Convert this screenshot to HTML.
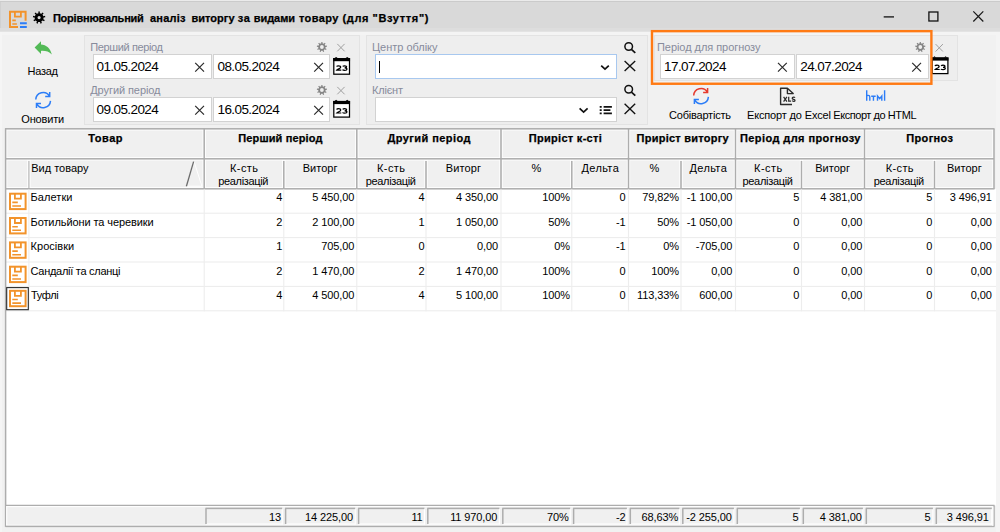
<!DOCTYPE html>
<html><head><meta charset="utf-8"><title>UI</title>
<style>
html,body{margin:0;padding:0}
body{width:1000px;height:532px;overflow:hidden;position:relative;background:#f1f1f1;font-family:"Liberation Sans",sans-serif;font-size:11px;color:#000}
.a{position:absolute}
.t{position:absolute;white-space:pre;font-family:"Liberation Sans",sans-serif}
.n{font-size:11px;line-height:13px;letter-spacing:-0.1px}
.tb{left:0;top:0;width:1000px;height:31px;background:#d9d9d9}
.pn{border:1px solid #e3e3e3;background:#eeeeee;box-sizing:border-box}
.in{background:#fff;border:1px solid #d2d2d2;box-sizing:border-box}
.inf{background:#fff;border:1px solid #a8c8ef;box-sizing:border-box}
.hc{background:#f0f0f0;box-sizing:border-box;border-left:1px solid #fff;border-top:1px solid #fff;border-right:1px solid #a6a6a6;border-bottom:1px solid #a6a6a6}
.fc{background:#f0f0f0;box-sizing:border-box;border-left:1px solid #a6a6a6;border-top:1px solid #a6a6a6;border-right:1px solid #fff;border-bottom:1px solid #fff}
.vl{width:1px;background:#efefef}
.hl{height:1px;background:#efefef}
svg{position:absolute;overflow:visible}

</style></head>
<body>
<div class="a tb" style="left:0px;top:0px;width:1000px;height:31px;"></div>
<div class="a " style="left:0px;top:0px;width:1000px;height:1px;background:#ebebeb"></div>
<div class="a " style="left:0px;top:1px;width:1000px;height:1px;background:#cbcbcb"></div>
<div class="a " style="left:0px;top:2px;width:1px;height:29px;background:#d0d0d0"></div>
<div class="a " style="left:0px;top:28px;width:1000px;height:3px;background:#dddddd"></div>
<div class="a " style="left:0px;top:31px;width:1000px;height:1px;background:#e3e3e3"></div>
<div class="a " style="left:0px;top:32px;width:1000px;height:3px;background:#f4f4f4"></div>
<div class="a " style="left:996px;top:32px;width:4px;height:500px;background:#f4f4f4"></div>
<div class="a " style="left:0px;top:32px;width:2px;height:500px;background:#f5f5f5"></div>
<div class="a pn" style="left:84px;top:35px;width:276px;height:90px;"></div>
<div class="a pn" style="left:366px;top:35px;width:282px;height:90px;"></div>
<div class="a pn" style="left:654px;top:35px;width:304px;height:46px;"></div>
<div class="a in" style="left:93px;top:54px;width:119px;height:25px;"></div>
<div class="a in" style="left:93px;top:97px;width:119px;height:25px;"></div>
<div class="a in" style="left:213px;top:54px;width:117px;height:25px;"></div>
<div class="a in" style="left:213px;top:97px;width:117px;height:25px;"></div>
<div class="a inf" style="left:375px;top:54px;width:242px;height:25px;"></div>
<div class="a in" style="left:375px;top:97px;width:242px;height:25px;"></div>
<div class="a in" style="left:660px;top:54px;width:135px;height:25px;"></div>
<div class="a in" style="left:796px;top:54px;width:133px;height:25px;"></div>
<div class="a " style="left:379px;top:61px;width:1px;height:12px;background:#000"></div>
<svg class="a" style="left:0;top:0" width="1000" height="532" viewBox="0 0 1000 532">
<rect x="5.6" y="188.8" width="990.4" height="316.7" fill="#fff"/>
<rect x="5.6" y="128.8" width="988.4" height="60" fill="#f0f0f0"/>
<rect x="5.6" y="505.5" width="988.4" height="20.9" fill="#f0f0f0"/>
<rect x="5.6" y="129.35" width="988.4" height="1.1" fill="#ffffff"/>
<rect x="5.6" y="159.35" width="988.4" height="1.1" fill="#ffffff"/>
<rect x="5.6" y="157.15" width="988.4" height="1.1" fill="#ffffff"/>
<rect x="5.6" y="187.15" width="988.4" height="1.1" fill="#ffffff"/>
<rect x="6.15" y="128.8" width="1.1" height="60" fill="#ffffff"/>
<rect x="29.45" y="159.3" width="1.1" height="29" fill="#ffffff"/>
<rect x="27.25" y="159.3" width="1.1" height="29" fill="#ffffff"/>
<rect x="204.75" y="129.3" width="1.1" height="59" fill="#ffffff"/>
<rect x="202.55" y="129.3" width="1.1" height="59" fill="#ffffff"/>
<rect x="284.35" y="159.3" width="1.1" height="29" fill="#ffffff"/>
<rect x="282.15" y="159.3" width="1.1" height="29" fill="#ffffff"/>
<rect x="357.35" y="129.3" width="1.1" height="59" fill="#ffffff"/>
<rect x="355.15" y="129.3" width="1.1" height="59" fill="#ffffff"/>
<rect x="426.55" y="159.3" width="1.1" height="29" fill="#ffffff"/>
<rect x="424.35" y="159.3" width="1.1" height="29" fill="#ffffff"/>
<rect x="501.55" y="129.3" width="1.1" height="59" fill="#ffffff"/>
<rect x="499.35" y="129.3" width="1.1" height="59" fill="#ffffff"/>
<rect x="572.35" y="159.3" width="1.1" height="29" fill="#ffffff"/>
<rect x="570.15" y="159.3" width="1.1" height="29" fill="#ffffff"/>
<rect x="629.05" y="129.3" width="1.1" height="59" fill="#ffffff"/>
<rect x="626.85" y="129.3" width="1.1" height="59" fill="#ffffff"/>
<rect x="681.55" y="159.3" width="1.1" height="29" fill="#ffffff"/>
<rect x="679.35" y="159.3" width="1.1" height="29" fill="#ffffff"/>
<rect x="736.05" y="129.3" width="1.1" height="59" fill="#ffffff"/>
<rect x="733.85" y="129.3" width="1.1" height="59" fill="#ffffff"/>
<rect x="802.05" y="159.3" width="1.1" height="29" fill="#ffffff"/>
<rect x="799.85" y="159.3" width="1.1" height="29" fill="#ffffff"/>
<rect x="865.05" y="129.3" width="1.1" height="59" fill="#ffffff"/>
<rect x="862.85" y="129.3" width="1.1" height="59" fill="#ffffff"/>
<rect x="935.05" y="159.3" width="1.1" height="29" fill="#ffffff"/>
<rect x="932.85" y="159.3" width="1.1" height="29" fill="#ffffff"/>
<rect x="992.35" y="129.3" width="1.1" height="59" fill="#ffffff"/>
<rect x="28.35" y="161" width="1.1" height="27.8" fill="#b4b4b4"/>
<rect x="203.45" y="128.8" width="1.5" height="60" fill="#adadad"/>
<rect x="283.05" y="161" width="1.5" height="27.8" fill="#adadad"/>
<rect x="356.05" y="128.8" width="1.5" height="60" fill="#adadad"/>
<rect x="425.25" y="161" width="1.5" height="27.8" fill="#adadad"/>
<rect x="500.25" y="128.8" width="1.5" height="60" fill="#adadad"/>
<rect x="571.05" y="161" width="1.5" height="27.8" fill="#adadad"/>
<rect x="627.75" y="128.8" width="1.5" height="60" fill="#adadad"/>
<rect x="680.25" y="161" width="1.5" height="27.8" fill="#adadad"/>
<rect x="734.75" y="128.8" width="1.5" height="60" fill="#adadad"/>
<rect x="800.75" y="161" width="1.5" height="27.8" fill="#adadad"/>
<rect x="863.75" y="128.8" width="1.5" height="60" fill="#adadad"/>
<rect x="933.75" y="161" width="1.5" height="27.8" fill="#adadad"/>
<rect x="993.25" y="128.8" width="1.5" height="60" fill="#adadad"/>
<rect x="5.1" y="128.05" width="989.4" height="1.5" fill="#adadad"/>
<rect x="5.6" y="158.05" width="988.4" height="1.5" fill="#adadad"/>
<rect x="5.6" y="188.05" width="988.9" height="1.5" fill="#adadad"/>
<rect x="28.35" y="189.4" width="1.1" height="121.9" fill="#ededed"/>
<rect x="203.65" y="189.4" width="1.1" height="121.9" fill="#ededed"/>
<rect x="283.25" y="189.4" width="1.1" height="121.9" fill="#ededed"/>
<rect x="356.25" y="189.4" width="1.1" height="121.9" fill="#ededed"/>
<rect x="425.45" y="189.4" width="1.1" height="121.9" fill="#ededed"/>
<rect x="500.45" y="189.4" width="1.1" height="121.9" fill="#ededed"/>
<rect x="571.25" y="189.4" width="1.1" height="121.9" fill="#ededed"/>
<rect x="627.95" y="189.4" width="1.1" height="121.9" fill="#ededed"/>
<rect x="680.45" y="189.4" width="1.1" height="121.9" fill="#ededed"/>
<rect x="734.95" y="189.4" width="1.1" height="121.9" fill="#ededed"/>
<rect x="800.95" y="189.4" width="1.1" height="121.9" fill="#ededed"/>
<rect x="863.95" y="189.4" width="1.1" height="121.9" fill="#ededed"/>
<rect x="933.95" y="189.4" width="1.1" height="121.9" fill="#ededed"/>
<rect x="6.1" y="212.65" width="989.9" height="1.1" fill="#ededed"/>
<rect x="6.1" y="237.05" width="989.9" height="1.1" fill="#ededed"/>
<rect x="6.1" y="261.45" width="989.9" height="1.1" fill="#ededed"/>
<rect x="6.1" y="285.85" width="989.9" height="1.1" fill="#ededed"/>
<rect x="6.1" y="310.25" width="989.9" height="1.1" fill="#ededed"/>
<rect x="4.85" y="128.3" width="1.5" height="398.6" fill="#adadad"/>
<rect x="5.6" y="504.75" width="988.9" height="1.5" fill="#adadad"/>
<rect x="6.1" y="506.05" width="987.9" height="1.1" fill="#ffffff"/>
<rect x="6.1" y="524.75" width="987.4" height="1.1" fill="#ffffff"/>
<rect x="6.15" y="506.5" width="1.1" height="19.4" fill="#ffffff"/>
<rect x="5.6" y="525.65" width="988.9" height="1.5" fill="#adadad"/>
<rect x="993.25" y="505.5" width="1.5" height="20.9" fill="#adadad"/>
<rect x="992.35" y="506.5" width="1.1" height="19.4" fill="#ffffff"/>
<rect x="206" y="523.45" width="76.7" height="1.1" fill="#ffffff"/>
<rect x="281.65" y="508.4" width="1.1" height="16.1" fill="#ffffff"/>
<rect x="205.5" y="507.65" width="76.7" height="1.5" fill="#adadad"/>
<rect x="205.25" y="508.4" width="1.5" height="15.6" fill="#adadad"/>
<rect x="285.6" y="523.45" width="70.1" height="1.1" fill="#ffffff"/>
<rect x="354.65" y="508.4" width="1.1" height="16.1" fill="#ffffff"/>
<rect x="285.1" y="507.65" width="70.1" height="1.5" fill="#adadad"/>
<rect x="284.85" y="508.4" width="1.5" height="15.6" fill="#adadad"/>
<rect x="358.6" y="523.45" width="66.3" height="1.1" fill="#ffffff"/>
<rect x="423.85" y="508.4" width="1.1" height="16.1" fill="#ffffff"/>
<rect x="358.1" y="507.65" width="66.3" height="1.5" fill="#adadad"/>
<rect x="357.85" y="508.4" width="1.5" height="15.6" fill="#adadad"/>
<rect x="427.8" y="523.45" width="72.1" height="1.1" fill="#ffffff"/>
<rect x="498.85" y="508.4" width="1.1" height="16.1" fill="#ffffff"/>
<rect x="427.3" y="507.65" width="72.1" height="1.5" fill="#adadad"/>
<rect x="427.05" y="508.4" width="1.5" height="15.6" fill="#adadad"/>
<rect x="502.8" y="523.45" width="67.9" height="1.1" fill="#ffffff"/>
<rect x="569.65" y="508.4" width="1.1" height="16.1" fill="#ffffff"/>
<rect x="502.3" y="507.65" width="67.9" height="1.5" fill="#adadad"/>
<rect x="502.05" y="508.4" width="1.5" height="15.6" fill="#adadad"/>
<rect x="573.6" y="523.45" width="53.8" height="1.1" fill="#ffffff"/>
<rect x="626.35" y="508.4" width="1.1" height="16.1" fill="#ffffff"/>
<rect x="573.1" y="507.65" width="53.8" height="1.5" fill="#adadad"/>
<rect x="572.85" y="508.4" width="1.5" height="15.6" fill="#adadad"/>
<rect x="630.3" y="523.45" width="49.6" height="1.1" fill="#ffffff"/>
<rect x="678.85" y="508.4" width="1.1" height="16.1" fill="#ffffff"/>
<rect x="629.8" y="507.65" width="49.6" height="1.5" fill="#adadad"/>
<rect x="629.55" y="508.4" width="1.5" height="15.6" fill="#adadad"/>
<rect x="682.8" y="523.45" width="51.6" height="1.1" fill="#ffffff"/>
<rect x="733.35" y="508.4" width="1.1" height="16.1" fill="#ffffff"/>
<rect x="682.3" y="507.65" width="51.6" height="1.5" fill="#adadad"/>
<rect x="682.05" y="508.4" width="1.5" height="15.6" fill="#adadad"/>
<rect x="737.3" y="523.45" width="63.1" height="1.1" fill="#ffffff"/>
<rect x="799.35" y="508.4" width="1.1" height="16.1" fill="#ffffff"/>
<rect x="736.8" y="507.65" width="63.1" height="1.5" fill="#adadad"/>
<rect x="736.55" y="508.4" width="1.5" height="15.6" fill="#adadad"/>
<rect x="803.3" y="523.45" width="60.1" height="1.1" fill="#ffffff"/>
<rect x="862.35" y="508.4" width="1.1" height="16.1" fill="#ffffff"/>
<rect x="802.8" y="507.65" width="60.1" height="1.5" fill="#adadad"/>
<rect x="802.55" y="508.4" width="1.5" height="15.6" fill="#adadad"/>
<rect x="866.3" y="523.45" width="67.1" height="1.1" fill="#ffffff"/>
<rect x="932.35" y="508.4" width="1.1" height="16.1" fill="#ffffff"/>
<rect x="865.8" y="507.65" width="67.1" height="1.5" fill="#adadad"/>
<rect x="865.55" y="508.4" width="1.5" height="15.6" fill="#adadad"/>
<rect x="936.3" y="523.45" width="56" height="1.1" fill="#ffffff"/>
<rect x="991.25" y="508.4" width="1.1" height="16.1" fill="#ffffff"/>
<rect x="935.8" y="507.65" width="56" height="1.5" fill="#adadad"/>
<rect x="935.55" y="508.4" width="1.5" height="15.6" fill="#adadad"/>
<rect x="6.7" y="287.6" width="21.6" height="22.1" fill="none" stroke="#2a2a2a" stroke-width="1.1"/>
</svg><svg class="a" style="left:0;top:0" width="1000" height="532" viewBox="0 0 1000 532" font-family="Liberation Sans, sans-serif">
<path d="M25.6 20.7 V11.7 H10 V27.1 H18" fill="none" stroke="#f2932b" stroke-width="2"/><path d="M14.9 11.7 V16.7 H20.9 V11.7" fill="none" stroke="#f2932b" stroke-width="1.8"/><path d="M12.3 20.4 H15.8 M12.3 24 H16.9" fill="none" stroke="#f2932b" stroke-width="1.6"/><path d="M20 23.2 H26.8 M20 27.1 H26.8" fill="none" stroke="#2c7df7" stroke-width="2"/>
<rect x="10" y="193.7" width="15.6" height="15.4" fill="none" stroke="#f2932b" stroke-width="2"/><path d="M14.9 193.7 V198.7 H20.9 V193.7" fill="none" stroke="#f2932b" stroke-width="1.8"/><path d="M12.3 202.4 H17.8 M12.3 206 H21" fill="none" stroke="#f2932b" stroke-width="1.6"/>
<rect x="10" y="218" width="15.6" height="15.4" fill="none" stroke="#f2932b" stroke-width="2"/><path d="M14.9 218 V223 H20.9 V218" fill="none" stroke="#f2932b" stroke-width="1.8"/><path d="M12.3 226.7 H17.8 M12.3 230.3 H21" fill="none" stroke="#f2932b" stroke-width="1.6"/>
<rect x="10" y="242.4" width="15.6" height="15.4" fill="none" stroke="#f2932b" stroke-width="2"/><path d="M14.9 242.4 V247.4 H20.9 V242.4" fill="none" stroke="#f2932b" stroke-width="1.8"/><path d="M12.3 251.1 H17.8 M12.3 254.7 H21" fill="none" stroke="#f2932b" stroke-width="1.6"/>
<rect x="10" y="266.7" width="15.6" height="15.4" fill="none" stroke="#f2932b" stroke-width="2"/><path d="M14.9 266.7 V271.7 H20.9 V266.7" fill="none" stroke="#f2932b" stroke-width="1.8"/><path d="M12.3 275.4 H17.8 M12.3 279 H21" fill="none" stroke="#f2932b" stroke-width="1.6"/>
<rect x="10" y="290.8" width="15.6" height="15.4" fill="none" stroke="#f2932b" stroke-width="2"/><path d="M14.9 290.8 V295.8 H20.9 V290.8" fill="none" stroke="#f2932b" stroke-width="1.8"/><path d="M12.3 299.5 H17.8 M12.3 303.1 H21" fill="none" stroke="#f2932b" stroke-width="1.6"/>
<path d="M38.32 11.45 L39.88 11.45 L39.76 13.15 L41.45 13.76 L42.46 12.39 L43.65 13.39 L42.47 14.62 L43.37 16.17 L45.02 15.77 L45.29 17.30 L43.60 17.48 L43.29 19.25 L44.82 20.00 L44.04 21.35 L42.62 20.40 L41.25 21.56 L41.93 23.11 L40.47 23.65 L40.00 22.01 L38.20 22.01 L37.73 23.65 L36.27 23.11 L36.95 21.56 L35.58 20.40 L34.16 21.35 L33.38 20.00 L34.91 19.25 L34.60 17.48 L32.91 17.30 L33.18 15.77 L34.83 16.17 L35.73 14.62 L34.55 13.39 L35.74 12.39 L36.75 13.76 L38.44 13.15Z M37.50 17.60 a1.60 1.60 0 1 0 3.20 0 a1.60 1.60 0 1 0 -3.20 0Z" fill="#000" fill-rule="evenodd"/>
<path d="M321.26 41.94 L322.54 41.94 L322.45 43.34 L323.83 43.85 L324.66 42.71 L325.64 43.53 L324.67 44.55 L325.41 45.83 L326.77 45.49 L326.99 46.75 L325.60 46.90 L325.34 48.36 L326.60 48.98 L325.96 50.08 L324.80 49.30 L323.66 50.25 L324.23 51.54 L323.03 51.97 L322.64 50.63 L321.16 50.63 L320.77 51.97 L319.57 51.54 L320.14 50.25 L319.00 49.30 L317.84 50.08 L317.20 48.98 L318.46 48.36 L318.20 46.90 L316.81 46.75 L317.03 45.49 L318.39 45.83 L319.13 44.55 L318.16 43.53 L319.14 42.71 L319.97 43.85 L321.35 43.34Z M320.00 47.00 a1.90 1.90 0 1 0 3.80 0 a1.90 1.90 0 1 0 -3.80 0Z" fill="#858585" fill-rule="evenodd"/>
<path d="M321.26 84.94 L322.54 84.94 L322.45 86.34 L323.83 86.85 L324.66 85.71 L325.64 86.53 L324.67 87.55 L325.41 88.83 L326.77 88.49 L326.99 89.75 L325.60 89.90 L325.34 91.36 L326.60 91.98 L325.96 93.08 L324.80 92.30 L323.66 93.25 L324.23 94.54 L323.03 94.97 L322.64 93.63 L321.16 93.63 L320.77 94.97 L319.57 94.54 L320.14 93.25 L319.00 92.30 L317.84 93.08 L317.20 91.98 L318.46 91.36 L318.20 89.90 L316.81 89.75 L317.03 88.49 L318.39 88.83 L319.13 87.55 L318.16 86.53 L319.14 85.71 L319.97 86.85 L321.35 86.34Z M320.00 90.00 a1.90 1.90 0 1 0 3.80 0 a1.90 1.90 0 1 0 -3.80 0Z" fill="#858585" fill-rule="evenodd"/>
<path d="M919.66 41.94 L920.94 41.94 L920.85 43.34 L922.23 43.85 L923.06 42.71 L924.04 43.53 L923.07 44.55 L923.81 45.83 L925.17 45.49 L925.39 46.75 L924.00 46.90 L923.74 48.36 L925.00 48.98 L924.36 50.08 L923.20 49.30 L922.06 50.25 L922.63 51.54 L921.43 51.97 L921.04 50.63 L919.56 50.63 L919.17 51.97 L917.97 51.54 L918.54 50.25 L917.40 49.30 L916.24 50.08 L915.60 48.98 L916.86 48.36 L916.60 46.90 L915.21 46.75 L915.43 45.49 L916.79 45.83 L917.53 44.55 L916.56 43.53 L917.54 42.71 L918.37 43.85 L919.75 43.34Z M918.40 47.00 a1.90 1.90 0 1 0 3.80 0 a1.90 1.90 0 1 0 -3.80 0Z" fill="#858585" fill-rule="evenodd"/>
<path d="M34.6 47.6 L41 41.2 L41 44.4 C46.2 44.8 50.6 48 51.8 54.6 C49 51.6 45.6 50.7 41 50.9 L41 54 Z" fill="#53ba57"/>
<g transform="translate(0 0)" fill="none" stroke-width="1.5"><path d="M35.8 99.6 A7.3 7.3 0 0 1 49.4 96.1 M49.7 92 V96.5 H45.2" stroke="#2c7df7"/><path d="M50.5 100.9 A7.3 7.3 0 0 1 36.8 103.8 M36.5 107.9 V103.4 H41" stroke="#2c7df7"/></g>
<g transform="translate(657.9 -4)" fill="none" stroke-width="1.5"><path d="M35.8 99.6 A7.3 7.3 0 0 1 49.4 96.1 M49.7 92 V96.5 H45.2" stroke="#e63b2e"/><path d="M50.5 100.9 A7.3 7.3 0 0 1 36.8 103.8 M36.5 107.9 V103.4 H41" stroke="#2c7df7"/></g>
<path d="M792 104.5 H780.6 V88.2 H787.4 L793.2 93.6 H787.4 V88.2" fill="none" stroke="#2b2b2b" stroke-width="1.4" stroke-linejoin="round"/>
<path d="M783.6 96.9 L786.9 101.6 M786.9 96.9 L783.6 101.6 M788.7 96.7 V101 H791 M795 97.6 Q794.6 97.1 793.6 97.1 Q792.2 97.1 792.2 98.2 Q792.2 99.1 793.6 99.3 Q795 99.5 795 100.4 Q795 101.3 793.6 101.3 Q792.5 101.3 792 100.7" fill="none" stroke="#2b2b2b" stroke-width="1.25"/>
<path d="M866.7 90.3 V100.8 M866.7 96 Q866.9 95.4 868.2 95.4 Q869.8 95.4 869.8 97 V100.8 M871.2 96.3 H875.7 M873.45 96.3 V100.8 M877.5 100.8 V96 L879.7 98.6 L881.8 96 V100.8 M884.6 90.3 V100.8" fill="none" stroke="#2c7df7" stroke-width="1.4"/>
<g><rect x="333.8" y="58.7" width="15.7" height="15.5" fill="#fff" stroke="#000" stroke-width="1.25"/><rect x="333.15" y="58" width="16.9" height="3.2" fill="#000"/><path d="M334.6 58.1 l1.5 -1.2 l1.5 1.2z M345.7 58.1 l1.5 -1.2 l1.5 1.2z" fill="#000"/><g transform="translate(336.4 65.2) scale(1 0.88)" fill="none" stroke="#000" stroke-width="1.35"><path d="M0.2 1.6 Q0.6 0.7 2.3 0.7 Q4.3 0.7 4.3 2.1 Q4.3 3.2 2.4 4.2 Q0.8 5 0.4 5.6 H4.9"/><path d="M6.3 1.4 Q6.9 0.7 8.3 0.7 Q10.2 0.7 10.2 1.9 Q10.2 3.1 8.2 3.1 Q10.5 3.1 10.5 4.5 Q10.5 5.8 8.4 5.8 Q6.7 5.8 6.1 5"/></g></g>
<g><rect x="333.8" y="101.6" width="15.7" height="15.5" fill="#fff" stroke="#000" stroke-width="1.25"/><rect x="333.15" y="100.9" width="16.9" height="3.2" fill="#000"/><path d="M334.6 101 l1.5 -1.2 l1.5 1.2z M345.7 101 l1.5 -1.2 l1.5 1.2z" fill="#000"/><g transform="translate(336.4 108.1) scale(1 0.88)" fill="none" stroke="#000" stroke-width="1.35"><path d="M0.2 1.6 Q0.6 0.7 2.3 0.7 Q4.3 0.7 4.3 2.1 Q4.3 3.2 2.4 4.2 Q0.8 5 0.4 5.6 H4.9"/><path d="M6.3 1.4 Q6.9 0.7 8.3 0.7 Q10.2 0.7 10.2 1.9 Q10.2 3.1 8.2 3.1 Q10.5 3.1 10.5 4.5 Q10.5 5.8 8.4 5.8 Q6.7 5.8 6.1 5"/></g></g>
<g><rect x="932.2" y="58.1" width="15.7" height="15.5" fill="#fff" stroke="#000" stroke-width="1.25"/><rect x="931.55" y="57.4" width="16.9" height="3.2" fill="#000"/><path d="M933 57.5 l1.5 -1.2 l1.5 1.2z M944.1 57.5 l1.5 -1.2 l1.5 1.2z" fill="#000"/><g transform="translate(934.8 64.6) scale(1 0.88)" fill="none" stroke="#000" stroke-width="1.35"><path d="M0.2 1.6 Q0.6 0.7 2.3 0.7 Q4.3 0.7 4.3 2.1 Q4.3 3.2 2.4 4.2 Q0.8 5 0.4 5.6 H4.9"/><path d="M6.3 1.4 Q6.9 0.7 8.3 0.7 Q10.2 0.7 10.2 1.9 Q10.2 3.1 8.2 3.1 Q10.5 3.1 10.5 4.5 Q10.5 5.8 8.4 5.8 Q6.7 5.8 6.1 5"/></g></g>
<path d="M195.2 62.9 L204 71.6 M195.2 71.6 L204 62.9" stroke="#2a2a2a" stroke-width="1.2" fill="none"/>
<path d="M314.2 62.9 L323 71.6 M314.2 71.6 L323 62.9" stroke="#2a2a2a" stroke-width="1.2" fill="none"/>
<path d="M778 62.9 L786.8 71.6 M778 71.6 L786.8 62.9" stroke="#2a2a2a" stroke-width="1.2" fill="none"/>
<path d="M912.2 62.9 L921 71.6 M912.2 71.6 L921 62.9" stroke="#2a2a2a" stroke-width="1.2" fill="none"/>
<path d="M195.2 105.9 L204 114.6 M195.2 114.6 L204 105.9" stroke="#2a2a2a" stroke-width="1.2" fill="none"/>
<path d="M314.2 105.9 L323 114.6 M314.2 114.6 L323 105.9" stroke="#2a2a2a" stroke-width="1.2" fill="none"/>
<path d="M337.3 43.9 L344.6 51.3 M337.3 51.3 L344.6 43.9" stroke="#a0a0a0" stroke-width="1" fill="none"/>
<path d="M337.3 86.9 L344.6 94.3 M337.3 94.3 L344.6 86.9" stroke="#a0a0a0" stroke-width="1" fill="none"/>
<path d="M935.6 44.1 L942.9 51.5 M935.6 51.5 L942.9 44.1" stroke="#a0a0a0" stroke-width="1" fill="none"/>
<path d="M624.6 61 L635.2 71.1 M624.6 71.1 L635.2 61" stroke="#111" stroke-width="1.35" fill="none"/>
<path d="M624.6 103.8 L635.2 114 M624.6 114 L635.2 103.8" stroke="#111" stroke-width="1.35" fill="none"/>
<circle cx="628.7" cy="46.5" r="3.8" fill="none" stroke="#111" stroke-width="1.5"/><path d="M631.4 49.4 L635.3 52.8" stroke="#111" stroke-width="1.7"/>
<circle cx="628.7" cy="89.3" r="3.8" fill="none" stroke="#111" stroke-width="1.5"/><path d="M631.4 92.2 L635.3 95.6" stroke="#111" stroke-width="1.7"/>
<path d="M601.2 65.6 L605 69.2 L608.8 65.6" fill="none" stroke="#111" stroke-width="1.7"/>
<path d="M579.6 108.3 L583.6 112 L587.6 108.3" fill="none" stroke="#111" stroke-width="1.7"/>
<path d="M599.7 106.9 H601.7 M603.6 106.9 H611.9" stroke="#111" stroke-width="1.7"/>
<path d="M599.7 110.1 H601.7 M603.6 110.1 H610.4" stroke="#111" stroke-width="1.7"/>
<path d="M599.7 113.3 H601.7 M603.6 113.3 H611.9" stroke="#111" stroke-width="1.7"/>
<path d="M883.7 16.9 H894" stroke="#111" stroke-width="1.3"/>
<rect x="928.9" y="12" width="9" height="9" fill="none" stroke="#111" stroke-width="1.3"/>
<path d="M973.3 11.4 L983.3 21.5 M973.3 21.5 L983.3 11.4" stroke="#1a1a1a" stroke-width="1.25" fill="none"/>
<path d="M194.3 162.3 L201.9 186.2 L186.8 186.2" stroke="#fff" stroke-width="1" fill="none"/><path d="M186.4 186.3 L193.6 161.6" stroke="#6c6c6c" stroke-width="1.3"/>
<rect x="652" y="31.15" width="279.4" height="52.6" fill="none" stroke="#ff7a14" stroke-width="2.4"/>
</svg>
<!-- text -->
<span class="t" style="left:52.90px;top:12.39px;font-size:11px;line-height:13px;letter-spacing:-0.220px;font-weight:bold;-webkit-text-stroke:0.25px #000;">Порівнювальний</span>
<span class="t" style="left:149.90px;top:12.39px;font-size:11px;line-height:13px;letter-spacing:0.239px;font-weight:bold;-webkit-text-stroke:0.25px #000;">аналіз</span>
<span class="t" style="left:191.50px;top:12.39px;font-size:11px;line-height:13px;letter-spacing:0.016px;font-weight:bold;-webkit-text-stroke:0.25px #000;">виторгу</span>
<span class="t" style="left:237.70px;top:12.39px;font-size:11px;line-height:13px;letter-spacing:0.747px;font-weight:bold;-webkit-text-stroke:0.25px #000;">за</span>
<span class="t" style="left:253.70px;top:12.39px;font-size:11px;line-height:13px;letter-spacing:-0.026px;font-weight:bold;-webkit-text-stroke:0.25px #000;">видами</span>
<span class="t" style="left:298.90px;top:12.39px;font-size:11px;line-height:13px;letter-spacing:0.442px;font-weight:bold;-webkit-text-stroke:0.25px #000;">товару</span>
<span class="t" style="left:342.50px;top:12.39px;font-size:11px;line-height:13px;letter-spacing:0.646px;font-weight:bold;-webkit-text-stroke:0.25px #000;">(для</span>
<span class="t" style="left:372.50px;top:12.39px;font-size:11px;line-height:13px;letter-spacing:0.664px;font-weight:bold;-webkit-text-stroke:0.25px #000;">&quot;Взуття&quot;)</span>
<span class="t" style="left:27.50px;top:64.89px;font-size:11px;line-height:13px;letter-spacing:-0.258px;">Назад</span>
<span class="t" style="left:21.25px;top:112.89px;font-size:11px;line-height:13px;letter-spacing:-0.154px;">Оновити</span>
<span class="t" style="left:669.00px;top:109.14px;font-size:11px;line-height:13px;letter-spacing:-0.207px;">Собівартість</span>
<span class="t" style="left:747.00px;top:109.14px;font-size:11px;line-height:13px;letter-spacing:-0.154px;">Експорт до Excel</span>
<span class="t" style="left:833.25px;top:109.14px;font-size:11px;line-height:13px;letter-spacing:-0.436px;">Експорт до HTML</span>
<span class="t" style="left:90.25px;top:41.19px;font-size:11px;line-height:13px;letter-spacing:-0.375px;color:#878b9c;">Перший період</span>
<span class="t" style="left:90.25px;top:84.19px;font-size:11px;line-height:13px;letter-spacing:-0.082px;color:#878b9c;">Другий період</span>
<span class="t" style="left:372.00px;top:41.19px;font-size:11px;line-height:13px;letter-spacing:-0.024px;color:#878b9c;">Центр обліку</span>
<span class="t" style="left:372.00px;top:84.19px;font-size:11px;line-height:13px;letter-spacing:-0.200px;color:#878b9c;">Клієнт</span>
<span class="t" style="left:657.00px;top:41.19px;font-size:11px;line-height:13px;letter-spacing:-0.055px;color:#878b9c;">Період для прогнозу</span>
<span class="t" style="left:96.50px;top:58.62px;font-size:13.5px;line-height:16px;letter-spacing:-0.592px;">01.05.2024</span>
<span class="t" style="left:217.50px;top:58.62px;font-size:13.5px;line-height:16px;letter-spacing:-0.592px;">08.05.2024</span>
<span class="t" style="left:96.50px;top:101.92px;font-size:13.5px;line-height:16px;letter-spacing:-0.592px;">09.05.2024</span>
<span class="t" style="left:217.50px;top:101.92px;font-size:13.5px;line-height:16px;letter-spacing:-0.592px;">16.05.2024</span>
<span class="t" style="left:664.00px;top:58.62px;font-size:13.5px;line-height:16px;letter-spacing:-0.564px;">17.07.2024</span>
<span class="t" style="left:800.25px;top:58.62px;font-size:13.5px;line-height:16px;letter-spacing:-0.592px;">24.07.2024</span>
<span class="t" style="left:88.25px;top:132.39px;font-size:11px;line-height:13px;letter-spacing:0.512px;font-weight:bold;-webkit-text-stroke:0.25px #000;">Товар</span>
<span class="t" style="left:238.25px;top:132.39px;font-size:11px;line-height:13px;letter-spacing:0.138px;font-weight:bold;-webkit-text-stroke:0.25px #000;">Перший період</span>
<span class="t" style="left:387.50px;top:132.39px;font-size:11px;line-height:13px;letter-spacing:0.434px;font-weight:bold;-webkit-text-stroke:0.25px #000;">Другий період</span>
<span class="t" style="left:528.75px;top:132.39px;font-size:11px;line-height:13px;letter-spacing:0.294px;font-weight:bold;-webkit-text-stroke:0.25px #000;">Приріст к-сті</span>
<span class="t" style="left:636.50px;top:132.39px;font-size:11px;line-height:13px;letter-spacing:0.258px;font-weight:bold;-webkit-text-stroke:0.25px #000;">Приріст виторгу</span>
<span class="t" style="left:740.00px;top:132.39px;font-size:11px;line-height:13px;letter-spacing:0.413px;font-weight:bold;-webkit-text-stroke:0.25px #000;">Період для прогнозу</span>
<span class="t" style="left:906.25px;top:132.39px;font-size:11px;line-height:13px;letter-spacing:0.354px;font-weight:bold;-webkit-text-stroke:0.25px #000;">Прогноз</span>
<span class="t" style="left:31.25px;top:162.39px;font-size:11px;line-height:13px;letter-spacing:-0.009px;">Вид товару</span>
<span class="t" style="left:230.00px;top:162.39px;font-size:11px;line-height:13px;letter-spacing:0.414px;">К-сть</span>
<span class="t" style="left:218.25px;top:174.89px;font-size:11px;line-height:13px;letter-spacing:-0.335px;">реалізацій</span>
<span class="t" style="left:377.00px;top:162.39px;font-size:11px;line-height:13px;letter-spacing:0.414px;">К-сть</span>
<span class="t" style="left:365.75px;top:174.89px;font-size:11px;line-height:13px;letter-spacing:-0.335px;">реалізацій</span>
<span class="t" style="left:754.00px;top:162.39px;font-size:11px;line-height:13px;letter-spacing:0.477px;">К-сть</span>
<span class="t" style="left:742.50px;top:174.89px;font-size:11px;line-height:13px;letter-spacing:-0.307px;">реалізацій</span>
<span class="t" style="left:885.75px;top:162.39px;font-size:11px;line-height:13px;letter-spacing:0.352px;">К-сть</span>
<span class="t" style="left:873.75px;top:174.89px;font-size:11px;line-height:13px;letter-spacing:-0.307px;">реалізацій</span>
<span class="t" style="left:302.75px;top:162.39px;font-size:11px;line-height:13px;letter-spacing:0.019px;">Виторг</span>
<span class="t" style="left:445.75px;top:162.39px;font-size:11px;line-height:13px;letter-spacing:0.119px;">Виторг</span>
<span class="t" style="left:815.25px;top:162.39px;font-size:11px;line-height:13px;letter-spacing:0.019px;">Виторг</span>
<span class="t" style="left:947.00px;top:162.39px;font-size:11px;line-height:13px;letter-spacing:0.019px;">Виторг</span>
<span class="t" style="left:531.50px;top:162.39px;font-size:11px;line-height:13px;letter-spacing:0.000px;">%</span>
<span class="t" style="left:649.50px;top:162.39px;font-size:11px;line-height:13px;letter-spacing:0.000px;">%</span>
<span class="t" style="left:581.50px;top:162.39px;font-size:11px;line-height:13px;letter-spacing:0.344px;">Дельта</span>
<span class="t" style="left:689.50px;top:162.39px;font-size:11px;line-height:13px;letter-spacing:0.344px;">Дельта</span>
<span class="t" style="left:30.50px;top:191.39px;font-size:11px;line-height:13px;letter-spacing:0.081px;">Балетки</span>
<span class="t" style="left:30.50px;top:216.39px;font-size:11px;line-height:13px;letter-spacing:-0.088px;">Ботильйони та черевики</span>
<span class="t" style="left:30.50px;top:239.89px;font-size:11px;line-height:13px;letter-spacing:0.051px;">Кросівки</span>
<span class="t" style="left:30.50px;top:265.39px;font-size:11px;line-height:13px;letter-spacing:-0.278px;">Сандалії та сланці</span>
<span class="t" style="left:31.00px;top:289.39px;font-size:11px;line-height:13px;letter-spacing:-0.352px;">Туфлі</span>
<span class="t n" style="right:717.65px;top:191.39px">4</span>
<span class="t n" style="right:645.65px;top:191.39px">5 450,00</span>
<span class="t n" style="right:575.40px;top:191.39px">4</span>
<span class="t n" style="right:501.90px;top:191.39px">4 350,00</span>
<span class="t n" style="right:430.15px;top:191.39px">100%</span>
<span class="t n" style="right:374.40px;top:191.39px">0</span>
<span class="t n" style="right:321.15px;top:191.39px">79,82%</span>
<span class="t n" style="right:267.65px;top:191.39px">-1 100,00</span>
<span class="t n" style="right:200.65px;top:191.39px">5</span>
<span class="t n" style="right:137.65px;top:191.39px">4 381,00</span>
<span class="t n" style="right:67.65px;top:191.39px">5</span>
<span class="t n" style="right:8.15px;top:191.39px">3 496,91</span>
<span class="t n" style="right:717.65px;top:216.39px">2</span>
<span class="t n" style="right:645.65px;top:216.39px">2 100,00</span>
<span class="t n" style="right:575.40px;top:216.39px">1</span>
<span class="t n" style="right:501.90px;top:216.39px">1 050,00</span>
<span class="t n" style="right:430.15px;top:216.39px">50%</span>
<span class="t n" style="right:374.40px;top:216.39px">-1</span>
<span class="t n" style="right:321.15px;top:216.39px">50%</span>
<span class="t n" style="right:267.65px;top:216.39px">-1 050,00</span>
<span class="t n" style="right:200.65px;top:216.39px">0</span>
<span class="t n" style="right:137.65px;top:216.39px">0,00</span>
<span class="t n" style="right:67.65px;top:216.39px">0</span>
<span class="t n" style="right:8.15px;top:216.39px">0,00</span>
<span class="t n" style="right:717.65px;top:239.89px">1</span>
<span class="t n" style="right:645.65px;top:239.89px">705,00</span>
<span class="t n" style="right:575.40px;top:239.89px">0</span>
<span class="t n" style="right:501.90px;top:239.89px">0,00</span>
<span class="t n" style="right:430.15px;top:239.89px">0%</span>
<span class="t n" style="right:374.40px;top:239.89px">-1</span>
<span class="t n" style="right:321.15px;top:239.89px">0%</span>
<span class="t n" style="right:267.65px;top:239.89px">-705,00</span>
<span class="t n" style="right:200.65px;top:239.89px">0</span>
<span class="t n" style="right:137.65px;top:239.89px">0,00</span>
<span class="t n" style="right:67.65px;top:239.89px">0</span>
<span class="t n" style="right:8.15px;top:239.89px">0,00</span>
<span class="t n" style="right:717.65px;top:265.39px">2</span>
<span class="t n" style="right:645.65px;top:265.39px">1 470,00</span>
<span class="t n" style="right:575.40px;top:265.39px">2</span>
<span class="t n" style="right:501.90px;top:265.39px">1 470,00</span>
<span class="t n" style="right:430.15px;top:265.39px">100%</span>
<span class="t n" style="right:374.40px;top:265.39px">0</span>
<span class="t n" style="right:321.15px;top:265.39px">100%</span>
<span class="t n" style="right:267.65px;top:265.39px">0,00</span>
<span class="t n" style="right:200.65px;top:265.39px">0</span>
<span class="t n" style="right:137.65px;top:265.39px">0,00</span>
<span class="t n" style="right:67.65px;top:265.39px">0</span>
<span class="t n" style="right:8.15px;top:265.39px">0,00</span>
<span class="t n" style="right:717.65px;top:289.39px">4</span>
<span class="t n" style="right:645.65px;top:289.39px">4 500,00</span>
<span class="t n" style="right:575.40px;top:289.39px">4</span>
<span class="t n" style="right:501.90px;top:289.39px">5 100,00</span>
<span class="t n" style="right:430.15px;top:289.39px">100%</span>
<span class="t n" style="right:374.40px;top:289.39px">0</span>
<span class="t n" style="right:321.15px;top:289.39px">113,33%</span>
<span class="t n" style="right:267.65px;top:289.39px">600,00</span>
<span class="t n" style="right:200.65px;top:289.39px">0</span>
<span class="t n" style="right:137.65px;top:289.39px">0,00</span>
<span class="t n" style="right:67.65px;top:289.39px">0</span>
<span class="t n" style="right:8.15px;top:289.39px">0,00</span>
<span class="t n" style="right:718.90px;top:510.64px">13</span>
<span class="t n" style="right:646.90px;top:510.64px">14 225,00</span>
<span class="t n" style="right:577.40px;top:510.64px">11</span>
<span class="t n" style="right:502.65px;top:510.64px">11 970,00</span>
<span class="t n" style="right:431.40px;top:510.64px">70%</span>
<span class="t n" style="right:374.40px;top:510.64px">-2</span>
<span class="t n" style="right:321.90px;top:510.64px">68,63%</span>
<span class="t n" style="right:268.15px;top:510.64px">-2 255,00</span>
<span class="t n" style="right:201.40px;top:510.64px">5</span>
<span class="t n" style="right:138.15px;top:510.64px">4 381,00</span>
<span class="t n" style="right:69.40px;top:510.64px">5</span>
<span class="t n" style="right:11.15px;top:510.64px">3 496,91</span>
</body></html>
